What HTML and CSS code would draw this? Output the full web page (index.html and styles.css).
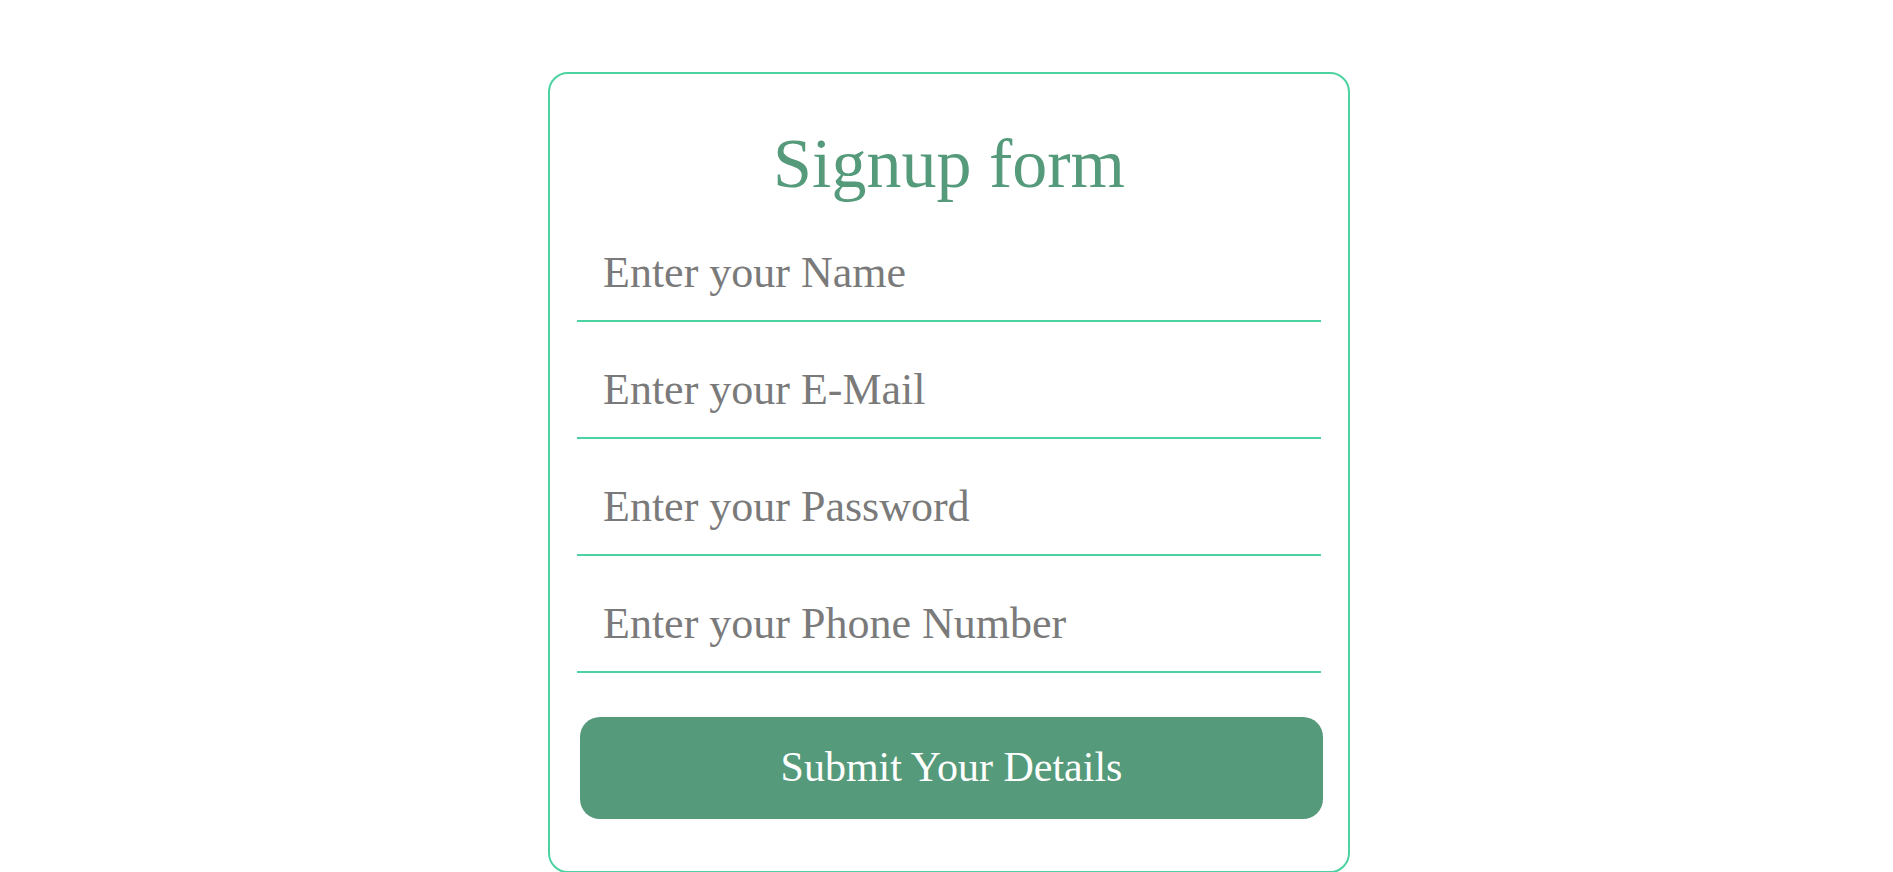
FILE: index.html
```html
<!DOCTYPE html>
<html lang="en">
<head>
<meta charset="utf-8">
<title>Signup form</title>
<link rel="stylesheet" href="styles.css">
</head>
<body>
<div class="page">
  <form class="card">
    <h1 class="title">Signup form</h1>
    <input class="field" type="text" placeholder="Enter your Name">
    <input class="field" type="email" placeholder="Enter your E-Mail">
    <input class="field" type="password" placeholder="Enter your Password">
    <input class="field" type="tel" placeholder="Enter your Phone Number">
    <button class="submit" type="button">Submit Your Details</button>
  </form>
</div>
</body>
</html>
```

FILE: styles.css
```css
html, body {
  margin: 0;
  padding: 0;
  background: #ffffff;
}

body {
  font-family: "Liberation Serif", "Times New Roman", serif;
  overflow: hidden;
}

.page {
  display: flex;
  justify-content: center;
  padding: 72px 0 0 5px;
}

.card {
  box-sizing: border-box;
  width: 802px;
  height: 801px;
  border: 2px solid #4cd3a1;
  border-radius: 20px;
  padding: 50px 27px 52px;
  display: flex;
  flex-direction: column;
  flex-shrink: 0;
}

.title {
  margin: 0 0 1px;
  font-weight: normal;
  font-size: 70px;
  line-height: 80px;
  height: 80px;
  text-align: center;
  color: #559a7a;
}

.field {
  box-sizing: border-box;
  display: block;
  width: 100%;
  height: 117px;
  margin: 0;
  padding: 33px 26px 14px;
  border: none;
  border-bottom: 2px solid #4cd3a1;
  outline: none;
  background: transparent;
  font-family: "Liberation Serif", "Times New Roman", serif;
  font-size: 44px;
  color: #555;
}

.field::placeholder {
  color: #7a7a7a;
  opacity: 1;
}

.submit {
  box-sizing: border-box;
  display: block;
  width: 743px;
  height: 102px;
  margin: 44px 0 0 3px;
  padding: 0 0 3px;
  border: none;
  border-radius: 20px;
  background: #559a7a;
  color: #ffffff;
  font-family: "Liberation Serif", "Times New Roman", serif;
  font-size: 42px;
  cursor: pointer;
}
```
